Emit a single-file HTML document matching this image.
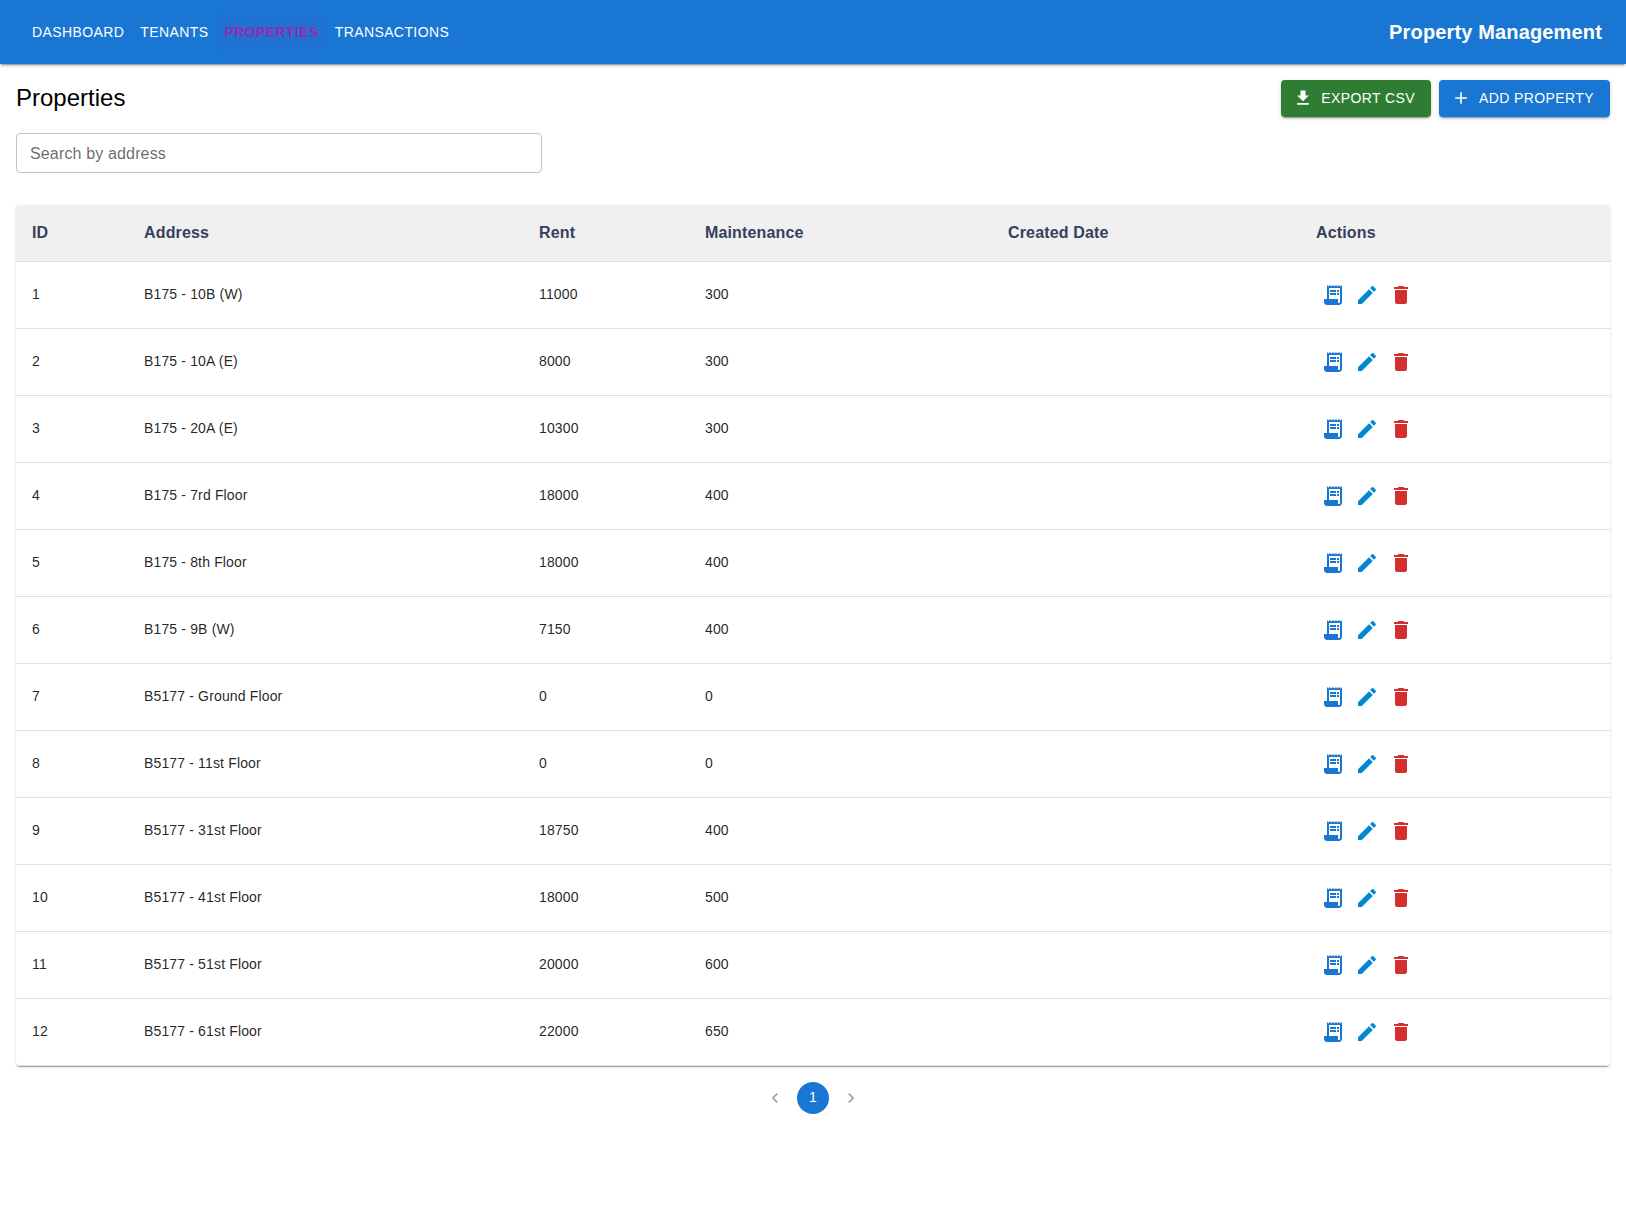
<!DOCTYPE html>
<html><head><meta charset="utf-8">
<style>
*{box-sizing:border-box;margin:0;padding:0}
html,body{width:1626px;height:1223px;background:#fff;overflow:hidden}
body{font-family:"Liberation Sans",sans-serif;color:rgba(0,0,0,0.87)}
.appbar{position:absolute;left:0;top:0;width:1626px;height:64px;background:#1976d2;color:#fff;
 box-shadow:0px 3px 1px -2px rgba(0,0,0,0.2),0px 2px 2px 0px rgba(0,0,0,0.14),0px 1px 5px 0px rgba(0,0,0,0.12);z-index:2}
.nav{position:absolute;top:14px;left:24px;display:flex}
.nav a{display:block;height:36px;padding:6px 8px;font-size:14px;line-height:24px;letter-spacing:0.4px;text-transform:uppercase;color:#fff;text-decoration:none;border-radius:4px}
.nav a.sel{color:#9c27b0;font-weight:bold;background:rgba(156,39,176,0.05)}
.brand{position:absolute;right:24px;top:0;height:64px;line-height:64px;font-size:20px;font-weight:bold;letter-spacing:0.15px}
.title{position:absolute;left:16px;top:79px;height:37px;line-height:37px;font-size:24px;color:#000}
.btns{position:absolute;right:16px;top:80px;display:flex;gap:8px}
.btn{height:37px;padding:6px 16px;font-size:14px;text-transform:uppercase;line-height:25px;letter-spacing:0.4px;color:#fff;border-radius:4px;display:flex;align-items:center;
 box-shadow:0px 3px 1px -2px rgba(0,0,0,0.2),0px 2px 2px 0px rgba(0,0,0,0.14),0px 1px 5px 0px rgba(0,0,0,0.12)}
.btn svg{width:20px;height:20px;margin-right:8px;margin-left:-4px;fill:#fff;position:relative;top:-1px}
.green{background:#2e7d32}.blue{background:#1976d2}
.search{position:absolute;left:16px;top:133px;width:526px;height:40px;border:1px solid rgba(0,0,0,0.23);border-radius:4px;
 font-size:16px;color:rgba(0,0,0,0.6);padding-left:13px;line-height:40px;letter-spacing:0.15px}
.paper{position:absolute;left:16px;top:205px;width:1594px;height:861px;border-radius:4px;background:#fff;overflow:hidden;
 box-shadow:0px 2px 1px -1px rgba(0,0,0,0.2),0px 1px 1px 0px rgba(0,0,0,0.14),0px 1px 3px 0px rgba(0,0,0,0.12)}
table{border-collapse:collapse;width:1594px;table-layout:fixed}
th,td{text-align:left;padding:16px;border-bottom:1px solid rgba(224,224,224,1);font-size:14px;line-height:24px;letter-spacing:0.15px}
th{background:#f0f0f0;font-weight:bold;font-size:16px;color:#35405c;height:56px;padding-top:0;padding-bottom:0}
td{height:67px;padding-top:0;padding-bottom:2px}td.ac{padding-bottom:0}
.acts{display:flex}
.ib{width:34px;height:34px;padding:5px;display:block}
.ib svg{width:24px;height:24px;display:block}
.pag{position:absolute;left:756px;top:1082px;display:flex}
.pi{width:32px;height:32px;margin:0 3px;border-radius:16px;display:flex;align-items:center;justify-content:center;font-size:14px}
.pi.cur{background:#1976d2;color:#fff}
.pi svg{width:20px;height:20px;fill:rgba(0,0,0,0.38)}
</style></head><body>
<div class="appbar">
 <div class="nav"><a>Dashboard</a><a>Tenants</a><a class="sel">Properties</a><a>Transactions</a></div>
 <div class="brand">Property Management</div>
</div>
<div class="title">Properties</div>
<div class="btns">
 <div class="btn green"><svg viewBox="0 0 24 24"><path d="M5 20h14v-2H5v2zM19 9h-4V3H9v6H5l7 7 7-7z"/></svg>Export CSV</div>
 <div class="btn blue"><svg viewBox="0 0 24 24"><path d="M19 13h-6v6h-2v-6H5v-2h6V5h2v6h6v2z"/></svg>Add Property</div>
</div>
<div class="search">Search by address</div>
<div class="paper">
<table>
<colgroup><col style="width:112px"><col style="width:395px"><col style="width:166px"><col style="width:303px"><col style="width:308px"><col style="width:310px"></colgroup>
<thead><tr><th>ID</th><th>Address</th><th>Rent</th><th>Maintenance</th><th>Created Date</th><th>Actions</th></tr></thead>
<tbody id="tb">
<tr><td>1</td><td>B175 - 10B (W)</td><td>11000</td><td>300</td><td></td><td class="ac"><div class="acts"><span class="ib"><svg viewBox="0 0 24 24" fill="#1976d2"><path d="M19.5 3.5 18 2l-1.5 1.5L15 2l-1.5 1.5L12 2l-1.5 1.5L9 2 7.5 3.5 6 2v14H3v3c0 1.66 1.34 3 3 3h12c1.66 0 3-1.34 3-3V2l-1.5 1.5zM19 19c0 .55-.45 1-1 1s-1-.45-1-1v-3H8V5h11v14z"/><path d="M9 7h6v2H9zm7 0h2v2h-2zm-7 3h6v2H9zm7 0h2v2h-2z"/></svg></span><span class="ib"><svg viewBox="0 0 24 24" fill="#0288d1"><path d="M3 17.25V21h3.75L17.81 9.94l-3.75-3.75L3 17.25zM20.71 7.04c.39-.39.39-1.02 0-1.41l-2.34-2.34a.9959.9959 0 0 0-1.41 0l-1.83 1.83 3.75 3.75 1.83-1.83z"/></svg></span><span class="ib"><svg viewBox="0 0 24 24" fill="#d32f2f"><path d="M6 19c0 1.1.9 2 2 2h8c1.1 0 2-.9 2-2V7H6v12zM19 4h-3.5l-1-1h-5l-1 1H5v2h14V4z"/></svg></span></div></td></tr>
<tr><td>2</td><td>B175 - 10A (E)</td><td>8000</td><td>300</td><td></td><td class="ac"><div class="acts"><span class="ib"><svg viewBox="0 0 24 24" fill="#1976d2"><path d="M19.5 3.5 18 2l-1.5 1.5L15 2l-1.5 1.5L12 2l-1.5 1.5L9 2 7.5 3.5 6 2v14H3v3c0 1.66 1.34 3 3 3h12c1.66 0 3-1.34 3-3V2l-1.5 1.5zM19 19c0 .55-.45 1-1 1s-1-.45-1-1v-3H8V5h11v14z"/><path d="M9 7h6v2H9zm7 0h2v2h-2zm-7 3h6v2H9zm7 0h2v2h-2z"/></svg></span><span class="ib"><svg viewBox="0 0 24 24" fill="#0288d1"><path d="M3 17.25V21h3.75L17.81 9.94l-3.75-3.75L3 17.25zM20.71 7.04c.39-.39.39-1.02 0-1.41l-2.34-2.34a.9959.9959 0 0 0-1.41 0l-1.83 1.83 3.75 3.75 1.83-1.83z"/></svg></span><span class="ib"><svg viewBox="0 0 24 24" fill="#d32f2f"><path d="M6 19c0 1.1.9 2 2 2h8c1.1 0 2-.9 2-2V7H6v12zM19 4h-3.5l-1-1h-5l-1 1H5v2h14V4z"/></svg></span></div></td></tr>
<tr><td>3</td><td>B175 - 20A (E)</td><td>10300</td><td>300</td><td></td><td class="ac"><div class="acts"><span class="ib"><svg viewBox="0 0 24 24" fill="#1976d2"><path d="M19.5 3.5 18 2l-1.5 1.5L15 2l-1.5 1.5L12 2l-1.5 1.5L9 2 7.5 3.5 6 2v14H3v3c0 1.66 1.34 3 3 3h12c1.66 0 3-1.34 3-3V2l-1.5 1.5zM19 19c0 .55-.45 1-1 1s-1-.45-1-1v-3H8V5h11v14z"/><path d="M9 7h6v2H9zm7 0h2v2h-2zm-7 3h6v2H9zm7 0h2v2h-2z"/></svg></span><span class="ib"><svg viewBox="0 0 24 24" fill="#0288d1"><path d="M3 17.25V21h3.75L17.81 9.94l-3.75-3.75L3 17.25zM20.71 7.04c.39-.39.39-1.02 0-1.41l-2.34-2.34a.9959.9959 0 0 0-1.41 0l-1.83 1.83 3.75 3.75 1.83-1.83z"/></svg></span><span class="ib"><svg viewBox="0 0 24 24" fill="#d32f2f"><path d="M6 19c0 1.1.9 2 2 2h8c1.1 0 2-.9 2-2V7H6v12zM19 4h-3.5l-1-1h-5l-1 1H5v2h14V4z"/></svg></span></div></td></tr>
<tr><td>4</td><td>B175 - 7rd Floor</td><td>18000</td><td>400</td><td></td><td class="ac"><div class="acts"><span class="ib"><svg viewBox="0 0 24 24" fill="#1976d2"><path d="M19.5 3.5 18 2l-1.5 1.5L15 2l-1.5 1.5L12 2l-1.5 1.5L9 2 7.5 3.5 6 2v14H3v3c0 1.66 1.34 3 3 3h12c1.66 0 3-1.34 3-3V2l-1.5 1.5zM19 19c0 .55-.45 1-1 1s-1-.45-1-1v-3H8V5h11v14z"/><path d="M9 7h6v2H9zm7 0h2v2h-2zm-7 3h6v2H9zm7 0h2v2h-2z"/></svg></span><span class="ib"><svg viewBox="0 0 24 24" fill="#0288d1"><path d="M3 17.25V21h3.75L17.81 9.94l-3.75-3.75L3 17.25zM20.71 7.04c.39-.39.39-1.02 0-1.41l-2.34-2.34a.9959.9959 0 0 0-1.41 0l-1.83 1.83 3.75 3.75 1.83-1.83z"/></svg></span><span class="ib"><svg viewBox="0 0 24 24" fill="#d32f2f"><path d="M6 19c0 1.1.9 2 2 2h8c1.1 0 2-.9 2-2V7H6v12zM19 4h-3.5l-1-1h-5l-1 1H5v2h14V4z"/></svg></span></div></td></tr>
<tr><td>5</td><td>B175 - 8th Floor</td><td>18000</td><td>400</td><td></td><td class="ac"><div class="acts"><span class="ib"><svg viewBox="0 0 24 24" fill="#1976d2"><path d="M19.5 3.5 18 2l-1.5 1.5L15 2l-1.5 1.5L12 2l-1.5 1.5L9 2 7.5 3.5 6 2v14H3v3c0 1.66 1.34 3 3 3h12c1.66 0 3-1.34 3-3V2l-1.5 1.5zM19 19c0 .55-.45 1-1 1s-1-.45-1-1v-3H8V5h11v14z"/><path d="M9 7h6v2H9zm7 0h2v2h-2zm-7 3h6v2H9zm7 0h2v2h-2z"/></svg></span><span class="ib"><svg viewBox="0 0 24 24" fill="#0288d1"><path d="M3 17.25V21h3.75L17.81 9.94l-3.75-3.75L3 17.25zM20.71 7.04c.39-.39.39-1.02 0-1.41l-2.34-2.34a.9959.9959 0 0 0-1.41 0l-1.83 1.83 3.75 3.75 1.83-1.83z"/></svg></span><span class="ib"><svg viewBox="0 0 24 24" fill="#d32f2f"><path d="M6 19c0 1.1.9 2 2 2h8c1.1 0 2-.9 2-2V7H6v12zM19 4h-3.5l-1-1h-5l-1 1H5v2h14V4z"/></svg></span></div></td></tr>
<tr><td>6</td><td>B175 - 9B (W)</td><td>7150</td><td>400</td><td></td><td class="ac"><div class="acts"><span class="ib"><svg viewBox="0 0 24 24" fill="#1976d2"><path d="M19.5 3.5 18 2l-1.5 1.5L15 2l-1.5 1.5L12 2l-1.5 1.5L9 2 7.5 3.5 6 2v14H3v3c0 1.66 1.34 3 3 3h12c1.66 0 3-1.34 3-3V2l-1.5 1.5zM19 19c0 .55-.45 1-1 1s-1-.45-1-1v-3H8V5h11v14z"/><path d="M9 7h6v2H9zm7 0h2v2h-2zm-7 3h6v2H9zm7 0h2v2h-2z"/></svg></span><span class="ib"><svg viewBox="0 0 24 24" fill="#0288d1"><path d="M3 17.25V21h3.75L17.81 9.94l-3.75-3.75L3 17.25zM20.71 7.04c.39-.39.39-1.02 0-1.41l-2.34-2.34a.9959.9959 0 0 0-1.41 0l-1.83 1.83 3.75 3.75 1.83-1.83z"/></svg></span><span class="ib"><svg viewBox="0 0 24 24" fill="#d32f2f"><path d="M6 19c0 1.1.9 2 2 2h8c1.1 0 2-.9 2-2V7H6v12zM19 4h-3.5l-1-1h-5l-1 1H5v2h14V4z"/></svg></span></div></td></tr>
<tr><td>7</td><td>B5177 - Ground Floor</td><td>0</td><td>0</td><td></td><td class="ac"><div class="acts"><span class="ib"><svg viewBox="0 0 24 24" fill="#1976d2"><path d="M19.5 3.5 18 2l-1.5 1.5L15 2l-1.5 1.5L12 2l-1.5 1.5L9 2 7.5 3.5 6 2v14H3v3c0 1.66 1.34 3 3 3h12c1.66 0 3-1.34 3-3V2l-1.5 1.5zM19 19c0 .55-.45 1-1 1s-1-.45-1-1v-3H8V5h11v14z"/><path d="M9 7h6v2H9zm7 0h2v2h-2zm-7 3h6v2H9zm7 0h2v2h-2z"/></svg></span><span class="ib"><svg viewBox="0 0 24 24" fill="#0288d1"><path d="M3 17.25V21h3.75L17.81 9.94l-3.75-3.75L3 17.25zM20.71 7.04c.39-.39.39-1.02 0-1.41l-2.34-2.34a.9959.9959 0 0 0-1.41 0l-1.83 1.83 3.75 3.75 1.83-1.83z"/></svg></span><span class="ib"><svg viewBox="0 0 24 24" fill="#d32f2f"><path d="M6 19c0 1.1.9 2 2 2h8c1.1 0 2-.9 2-2V7H6v12zM19 4h-3.5l-1-1h-5l-1 1H5v2h14V4z"/></svg></span></div></td></tr>
<tr><td>8</td><td>B5177 - 11st Floor</td><td>0</td><td>0</td><td></td><td class="ac"><div class="acts"><span class="ib"><svg viewBox="0 0 24 24" fill="#1976d2"><path d="M19.5 3.5 18 2l-1.5 1.5L15 2l-1.5 1.5L12 2l-1.5 1.5L9 2 7.5 3.5 6 2v14H3v3c0 1.66 1.34 3 3 3h12c1.66 0 3-1.34 3-3V2l-1.5 1.5zM19 19c0 .55-.45 1-1 1s-1-.45-1-1v-3H8V5h11v14z"/><path d="M9 7h6v2H9zm7 0h2v2h-2zm-7 3h6v2H9zm7 0h2v2h-2z"/></svg></span><span class="ib"><svg viewBox="0 0 24 24" fill="#0288d1"><path d="M3 17.25V21h3.75L17.81 9.94l-3.75-3.75L3 17.25zM20.71 7.04c.39-.39.39-1.02 0-1.41l-2.34-2.34a.9959.9959 0 0 0-1.41 0l-1.83 1.83 3.75 3.75 1.83-1.83z"/></svg></span><span class="ib"><svg viewBox="0 0 24 24" fill="#d32f2f"><path d="M6 19c0 1.1.9 2 2 2h8c1.1 0 2-.9 2-2V7H6v12zM19 4h-3.5l-1-1h-5l-1 1H5v2h14V4z"/></svg></span></div></td></tr>
<tr><td>9</td><td>B5177 - 31st Floor</td><td>18750</td><td>400</td><td></td><td class="ac"><div class="acts"><span class="ib"><svg viewBox="0 0 24 24" fill="#1976d2"><path d="M19.5 3.5 18 2l-1.5 1.5L15 2l-1.5 1.5L12 2l-1.5 1.5L9 2 7.5 3.5 6 2v14H3v3c0 1.66 1.34 3 3 3h12c1.66 0 3-1.34 3-3V2l-1.5 1.5zM19 19c0 .55-.45 1-1 1s-1-.45-1-1v-3H8V5h11v14z"/><path d="M9 7h6v2H9zm7 0h2v2h-2zm-7 3h6v2H9zm7 0h2v2h-2z"/></svg></span><span class="ib"><svg viewBox="0 0 24 24" fill="#0288d1"><path d="M3 17.25V21h3.75L17.81 9.94l-3.75-3.75L3 17.25zM20.71 7.04c.39-.39.39-1.02 0-1.41l-2.34-2.34a.9959.9959 0 0 0-1.41 0l-1.83 1.83 3.75 3.75 1.83-1.83z"/></svg></span><span class="ib"><svg viewBox="0 0 24 24" fill="#d32f2f"><path d="M6 19c0 1.1.9 2 2 2h8c1.1 0 2-.9 2-2V7H6v12zM19 4h-3.5l-1-1h-5l-1 1H5v2h14V4z"/></svg></span></div></td></tr>
<tr><td>10</td><td>B5177 - 41st Floor</td><td>18000</td><td>500</td><td></td><td class="ac"><div class="acts"><span class="ib"><svg viewBox="0 0 24 24" fill="#1976d2"><path d="M19.5 3.5 18 2l-1.5 1.5L15 2l-1.5 1.5L12 2l-1.5 1.5L9 2 7.5 3.5 6 2v14H3v3c0 1.66 1.34 3 3 3h12c1.66 0 3-1.34 3-3V2l-1.5 1.5zM19 19c0 .55-.45 1-1 1s-1-.45-1-1v-3H8V5h11v14z"/><path d="M9 7h6v2H9zm7 0h2v2h-2zm-7 3h6v2H9zm7 0h2v2h-2z"/></svg></span><span class="ib"><svg viewBox="0 0 24 24" fill="#0288d1"><path d="M3 17.25V21h3.75L17.81 9.94l-3.75-3.75L3 17.25zM20.71 7.04c.39-.39.39-1.02 0-1.41l-2.34-2.34a.9959.9959 0 0 0-1.41 0l-1.83 1.83 3.75 3.75 1.83-1.83z"/></svg></span><span class="ib"><svg viewBox="0 0 24 24" fill="#d32f2f"><path d="M6 19c0 1.1.9 2 2 2h8c1.1 0 2-.9 2-2V7H6v12zM19 4h-3.5l-1-1h-5l-1 1H5v2h14V4z"/></svg></span></div></td></tr>
<tr><td>11</td><td>B5177 - 51st Floor</td><td>20000</td><td>600</td><td></td><td class="ac"><div class="acts"><span class="ib"><svg viewBox="0 0 24 24" fill="#1976d2"><path d="M19.5 3.5 18 2l-1.5 1.5L15 2l-1.5 1.5L12 2l-1.5 1.5L9 2 7.5 3.5 6 2v14H3v3c0 1.66 1.34 3 3 3h12c1.66 0 3-1.34 3-3V2l-1.5 1.5zM19 19c0 .55-.45 1-1 1s-1-.45-1-1v-3H8V5h11v14z"/><path d="M9 7h6v2H9zm7 0h2v2h-2zm-7 3h6v2H9zm7 0h2v2h-2z"/></svg></span><span class="ib"><svg viewBox="0 0 24 24" fill="#0288d1"><path d="M3 17.25V21h3.75L17.81 9.94l-3.75-3.75L3 17.25zM20.71 7.04c.39-.39.39-1.02 0-1.41l-2.34-2.34a.9959.9959 0 0 0-1.41 0l-1.83 1.83 3.75 3.75 1.83-1.83z"/></svg></span><span class="ib"><svg viewBox="0 0 24 24" fill="#d32f2f"><path d="M6 19c0 1.1.9 2 2 2h8c1.1 0 2-.9 2-2V7H6v12zM19 4h-3.5l-1-1h-5l-1 1H5v2h14V4z"/></svg></span></div></td></tr>
<tr><td>12</td><td>B5177 - 61st Floor</td><td>22000</td><td>650</td><td></td><td class="ac"><div class="acts"><span class="ib"><svg viewBox="0 0 24 24" fill="#1976d2"><path d="M19.5 3.5 18 2l-1.5 1.5L15 2l-1.5 1.5L12 2l-1.5 1.5L9 2 7.5 3.5 6 2v14H3v3c0 1.66 1.34 3 3 3h12c1.66 0 3-1.34 3-3V2l-1.5 1.5zM19 19c0 .55-.45 1-1 1s-1-.45-1-1v-3H8V5h11v14z"/><path d="M9 7h6v2H9zm7 0h2v2h-2zm-7 3h6v2H9zm7 0h2v2h-2z"/></svg></span><span class="ib"><svg viewBox="0 0 24 24" fill="#0288d1"><path d="M3 17.25V21h3.75L17.81 9.94l-3.75-3.75L3 17.25zM20.71 7.04c.39-.39.39-1.02 0-1.41l-2.34-2.34a.9959.9959 0 0 0-1.41 0l-1.83 1.83 3.75 3.75 1.83-1.83z"/></svg></span><span class="ib"><svg viewBox="0 0 24 24" fill="#d32f2f"><path d="M6 19c0 1.1.9 2 2 2h8c1.1 0 2-.9 2-2V7H6v12zM19 4h-3.5l-1-1h-5l-1 1H5v2h14V4z"/></svg></span></div></td></tr>
</tbody></table>
</div>
<div class="pag">
 <div class="pi"><svg viewBox="0 0 24 24"><path d="M15.41 7.41 14 6l-6 6 6 6 1.41-1.41L10.83 12z"/></svg></div>
 <div class="pi cur"><span style="position:relative;top:-1px">1</span></div>
 <div class="pi"><svg viewBox="0 0 24 24"><path d="M10 6 8.59 7.41 13.17 12l-4.58 4.59L10 18l6-6z"/></svg></div>
</div>
</body></html>
